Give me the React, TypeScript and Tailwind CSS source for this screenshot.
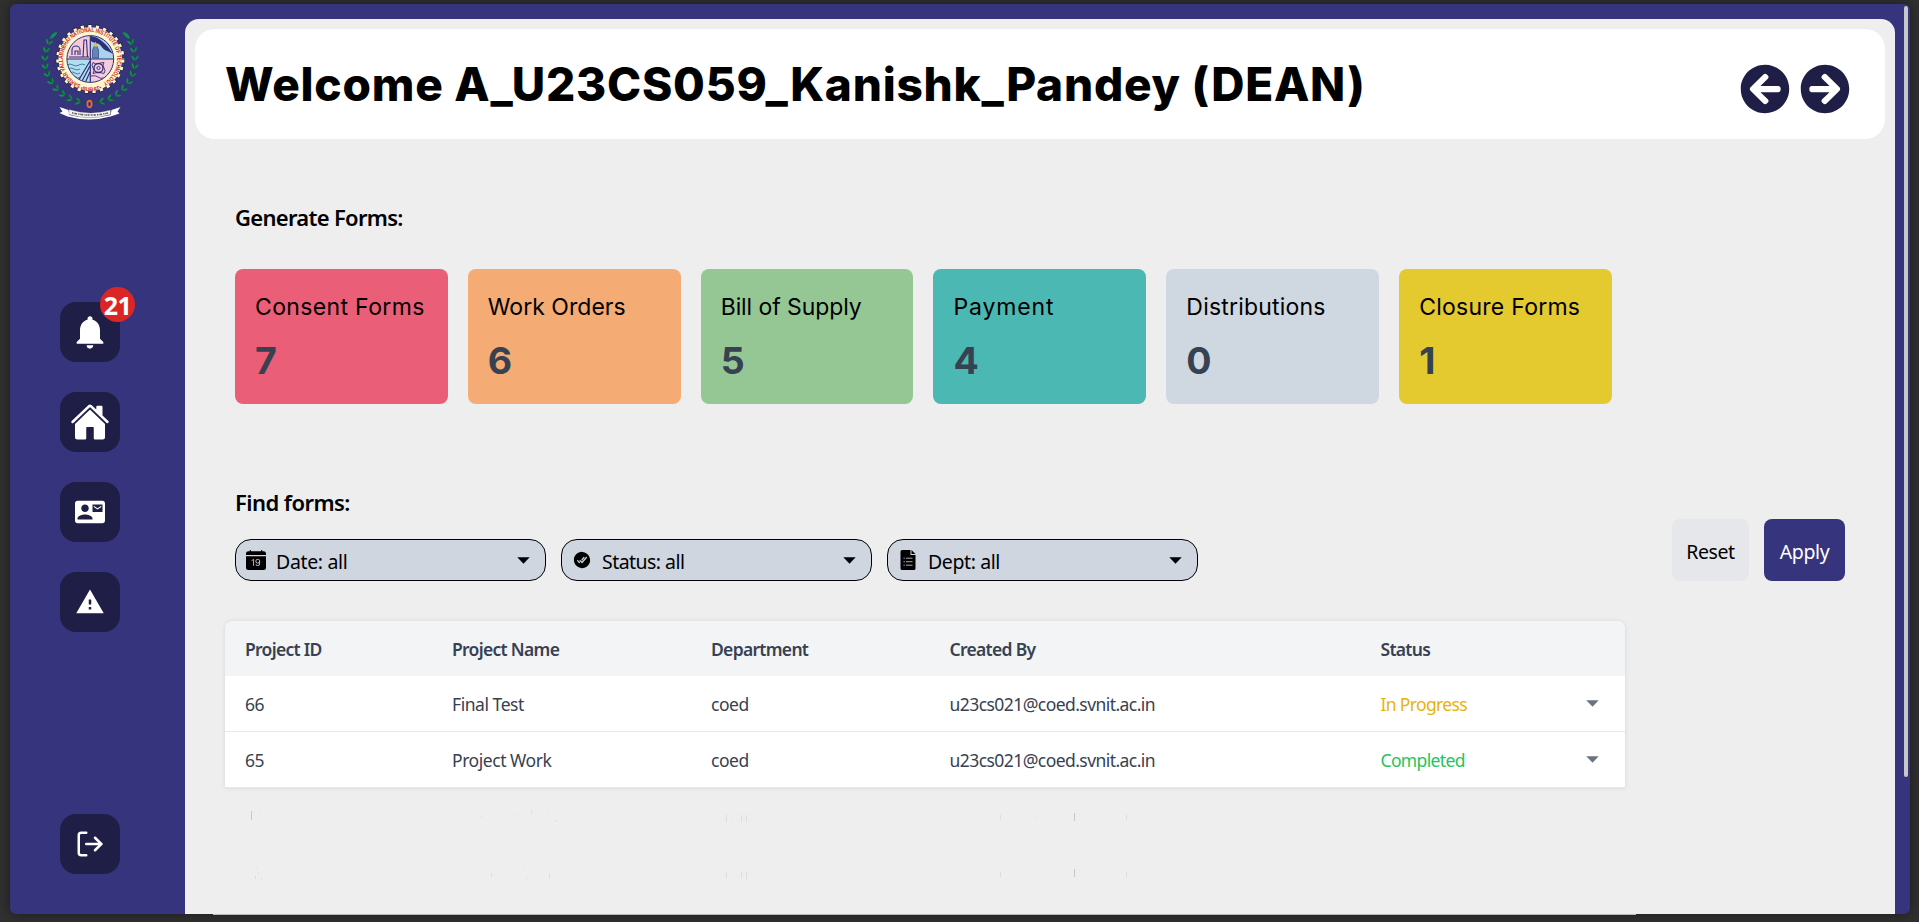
import type { ReactNode } from "react";
import { FaArrowCircleLeft, FaArrowCircleRight } from "react-icons/fa";
import { MdContactMail, MdNotifications, MdWarning } from "react-icons/md";
import { IoCheckmarkDoneCircle, IoHome } from "react-icons/io5";
import { BsCalendarDateFill } from "react-icons/bs";
import { LuLogOut } from "react-icons/lu";

const cards = [
  { label: "Consent Forms", value: 7, color: "bg-[#eb5e78]", track: "tracking-[0.35px]" },
  { label: "Work Orders", value: 6, color: "bg-[#f4ab74]", track: "tracking-[0.03px]" },
  { label: "Bill of Supply", value: 5, color: "bg-[#95c795]", track: "tracking-[-0.08px]" },
  { label: "Payment", value: 4, color: "bg-[#4bb8b4]", track: "tracking-[0.85px]" },
  { label: "Distributions", value: 0, color: "bg-[#cfd7e1]", track: "tracking-[0.2px]" },
  { label: "Closure Forms", value: 1, color: "bg-[#e4c92f]", track: "tracking-[0.25px]" },
];

const rows = [
  { id: "66", name: "Final Test", dept: "coed", by: "u23cs021@coed.svnit.ac.in", status: "In Progress", color: "text-[#eab308]" },
  { id: "65", name: "Project Work", dept: "coed", by: "u23cs021@coed.svnit.ac.in", status: "Completed", color: "text-[#22c55e]" },
];

const columns = "grid grid-cols-[207px_259px_238.5px_431px_1fr] pl-5";

// x, y and height of the faint marks under the table
const specks: [number, number, number][] = [
  [26, 0, 9], [34, 1, 1], [256, 5, 1], [289, 4, 1], [306, 0, 3], [323, 0, 1], [330, 9, 2],
  [501, 4, 7], [506, 7, 1], [516, 4, 7], [521, 4, 7], [775, 4, 5], [811, 6, 1], [849, 2, 8], [901, 4, 5],
  [31, 57, 1], [33, 61, 2], [30, 65, 3], [36, 68, 1], [249, 57, 1], [266, 62, 4], [298, 57, 1],
  [302, 67, 1], [324, 62, 5], [501, 61, 6], [516, 61, 6], [521, 61, 7], [775, 61, 5], [849, 58, 8], [901, 61, 5],
];

function Leaf({ angle, side }: { angle: number; side: number }) {
  const a = (angle * Math.PI) / 180;
  const x = 90 + 45 * Math.cos(a);
  const y = 60 + 43 * Math.sin(a);
  return (
    <g transform={`translate(${x} ${y}) rotate(${angle - 90 * side}) scale(.88)`}>
      <path d="M0 0C1 -2.6 3.4 -4 6 -4 5.6 -1.8 3 0 0 0Z" fill="#0f9347" />
      <path d="M0 0C1 2.6 3.4 4 6 4 5.6 1.8 3 0 0 0Z" fill="#0c8a41" />
    </g>
  );
}

function Emblem() {
  const leftLeaves = [102, 113, 124, 135, 146, 157, 168, 179, 190, 201];
  const rightLeaves = leftLeaves.map((a) => 180 - a);
  return (
    <svg width="102" height="100" viewBox="40 22 102 100">
      <defs>
        <path id="ring" d="M80.6 84.6A27.2 27.2 0 1 1 101.4 83.8" />
        <path id="ringBottom" d="M78 88.6A31.8 31.8 0 0 0 104 88" />
        <clipPath id="disc"><circle cx="90.3" cy="59" r="23.2" /></clipPath>
      </defs>
      <path d="M50 40A45 43 0 0 0 86 103M130 40A45 43 0 0 1 94 103" fill="none" stroke="#14502f" strokeWidth="0.9" />
      {leftLeaves.map((a) => <Leaf key={a} angle={a} side={-1} />)}
      {rightLeaves.map((a) => <Leaf key={a} angle={a} side={1} />)}
      <path d="M50 39C50.5 35 53.500 32 57.500 32 56 36 53 38.500 50 39ZM130 39C129.500 35 126.500 32 122.500 32 124 36 127 38.500 130 39Z" fill="#0f9347" />
      <circle cx="90.3" cy="59" r="32.8" fill="none" stroke="#26223a" strokeWidth="4" strokeDasharray="4.3 3.287" />
      <circle cx="90.3" cy="59" r="32.3" fill="none" stroke="#fdf6cf" strokeWidth="3.600" strokeDasharray="3.2 4.272" strokeDashoffset="-0.5" />
      <circle cx="90.3" cy="59" r="31.8" fill="#fdf6cf" />
      <g clipPath="url(#disc)">
        <path d="M66 35h24v24H66z" fill="#f4cbdc" />
        <path d="M90 35h25v24H90z" fill="#a9d3ec" />
        <path d="M66 59h24v25H66z" fill="#b3dcf0" />
        <path d="M90 59h25v25H90z" fill="#f4cbdc" />
        <path d="M91 36c8 1 16 8 22 18-6-4-9-3-12-8-3-4-6-2-10-5z" fill="#2f2f78" />
        <path d="M92.500 58V50l3-7 3 7v8z" fill="#6387b4" stroke="#2f2f78" strokeWidth="0.600" />
        <path d="M93.500 46.500l2-5 2 5z" fill="#f0c32c" />
        <path d="M83 57l1-17h2.500l1 17M72 55v-5a4 4 0 0 1 8 0v5M75 55v-4h3v4M69 57h20" fill="none" stroke="#2f2f78" strokeWidth="1.1" />
        <path d="M67 65q3-2 6 0t6 0 6 0M68 69q3-2 6 0t6 0M70 73q2.500-2 5 0t5 0M72 77q2-2 4 0t4 0" fill="none" stroke="#2f7d9e" strokeWidth="0.9" />
        <path d="M90 61L77 83M90 66L81 83M90 72l-5 11" fill="none" stroke="#2f2f78" strokeWidth="1.200" />
        <circle cx="98.500" cy="68" r="4.500" fill="none" stroke="#2f2f78" strokeWidth="1.300" />
        <circle cx="98.500" cy="68" r="1.600" fill="none" stroke="#2f2f78" strokeWidth="0.9" />
        <path d="M93 62.500q2 2 5.500 1t5.500-1q-2 3 0 5.500t0 5.500q-3-1-5.500-1t-5.500 1q2-3 0-5.500t0-5.500zM91 76q5-1 7 1t6 1" fill="none" stroke="#2f2f78" strokeWidth="0.900" />
      </g>
      <path d="M67 59h46.600M90.300 35.700v46.600" stroke="#2f2f78" strokeWidth="1.200" />
      <circle cx="90.3" cy="59" r="23.4" fill="none" stroke="#2f2f78" strokeWidth="1" />
      <text fontSize="6.2" fontWeight="700" fill="#c8281c" fontFamily="Liberation Sans, sans-serif">
        <textPath href="#ring" textLength="147" lengthAdjust="spacingAndGlyphs">SARDAR VALLABHBHAI NATIONAL INSTITUTE OF TECHNOLOGY</textPath>
      </text>
      <text fontSize="5.4" fontWeight="700" fill="#c8281c" fontFamily="Liberation Sans, sans-serif">
        <textPath href="#ringBottom" startOffset="50%" textAnchor="middle">•SURAT•</textPath>
      </text>
      <ellipse cx="89.5" cy="104" rx="2.1" ry="3.2" fill="#2f2f78" stroke="#e2683a" strokeWidth="1.900" />
      <path d="M59.500 107l9 3 1 5q20 5 41 0l1-5 9-3-3 4.500 2 2-9 3q-21 6-43 0l-8-3.500 3-1.500z" fill="#fff" />
      <path d="M69 109.500v5q21 6.500 41.500 0v-4.500q-20.500 6-41.500-0.500z" fill="#f4f4f4" stroke="#555" strokeWidth="0.300" />
      <path d="M72 112.800q18 4.500 36 0.200" fill="none" stroke="#555" strokeWidth="1.5" strokeDasharray="1.200 .6 .8 .5 2 1.2" />
    </svg>
  );
}

function Caret({ className }: { className: string }) {
  return (
    <svg width="13" height="7" viewBox="0 0 13 7" className={className}>
      <path d="M0.300 0.300h12.400L6.500 6.700z" fill="currentColor" />
    </svg>
  );
}

function FileIcon() {
  return (
    <svg width="20" height="20" viewBox="0 0 20 20">
      <path d="M4 0h8.500v5h5v13.500a1.500 1.500 0 0 1-1.500 1.500H4a1.500 1.500 0 0 1-1.500-1.500V1.500A1.500 1.500 0 0 1 4 0zM13.500 0l4 4h-4z" fill="#000" />
      <path d="M5.500 8.200h1.300M5.500 11.700h1.300M5.500 15.200h1.300M8 8.200h6.500M8 11.700h6.500M8 15.200h6.500" stroke="#cfd6e0" strokeWidth="0.8" />
    </svg>
  );
}

function SideButton({ children }: { children: ReactNode }) {
  return (
    <button className="relative flex size-[60px] items-center justify-center rounded-2xl bg-[#1e1e46] text-white">
      {children}
    </button>
  );
}

function Filter({ icon, label, track }: { icon: ReactNode; label: string; track: string }) {
  return (
    <button className="flex h-[42px] w-[311px] items-center rounded-2xl border border-black bg-[#cfd6e0] pr-[15px] pl-[10px] text-black">
      {icon}
      <span className={`ml-[10px] pt-[3px] text-[19.5px] leading-7 ${track}`}>{label}</span>
      <Caret className="ml-auto" />
    </button>
  );
}

export default function App() {
  return (
    <div className="h-[922px] w-full overflow-hidden bg-[#303030] pt-1 font-['Noto_Sans',sans-serif]">
      <div className="ml-[10px] flex h-[910px] w-[1900px] rounded-md bg-[#35347c] shadow-[0_0_12px_rgba(0,0,0,0.45)]">
        <aside className="flex h-full w-[175px] shrink-0 flex-col items-start">
          <div className="ml-[30px] h-[298px] pt-[18px]"><Emblem /></div>
          <nav className="ml-[50px] flex flex-col gap-[30px]">
            <SideButton>
              <MdNotifications size={40} />
              <span className="absolute -top-[15px] left-10 flex size-[35px] items-center justify-center rounded-full bg-[#dc2626] pt-0.5 text-[25px] leading-none font-bold tracking-[-0.5px]">21</span>
            </SideButton>
            <SideButton><IoHome size={40} /></SideButton>
            <SideButton><MdContactMail size={30} /></SideButton>
            <SideButton><MdWarning size={30} /></SideButton>
          </nav>
          <div className="mt-auto mb-10 ml-[50px]">
            <SideButton><LuLogOut size={30} /></SideButton>
          </div>
        </aside>

        <main className="mt-[15px] h-[895px] w-[1710px] shrink-0 rounded-t-[14px] bg-[#eeeeee] pt-[10px]">
          <header className="mx-[10px] flex h-[110px] items-center justify-between rounded-[20px] bg-white pr-[35px] pl-[30px]">
            <h1 className="pb-px font-['Inter',sans-serif] text-[46px] leading-[56px] font-extrabold tracking-[0.76px] whitespace-nowrap text-black">
              Welcome A_U23CS059_Kanishk_Pandey (DEAN)
            </h1>
            <div className="flex gap-[10px] pt-[10px] text-[#1e1e46]">
              <FaArrowCircleLeft size={50} />
              <FaArrowCircleRight size={50} />
            </div>
          </header>

          <section className="pt-[62px] pl-[50px]">
            <h2 className="text-[22px] leading-8 font-semibold tracking-[-0.7px]">Generate Forms:</h2>
            <div className="mt-9 grid w-[1377px] grid-cols-6 gap-5">
              {cards.map((c) => (
                <div key={c.label} className={`h-[135px] rounded-lg px-5 pt-[22px] font-['Inter',sans-serif] ${c.color}`}>
                  <p className={`text-[23px] leading-8 whitespace-nowrap text-black ${c.track}`}>{c.label}</p>
                  <p className="mt-[18px] text-[37.5px] leading-10 font-bold text-[#374151]">{c.value}</p>
                </div>
              ))}
            </div>
          </section>

          <section className="mt-[82px] flex items-end justify-between pr-[50px] pl-[50px]">
            <div>
              <h2 className="text-[22px] leading-8 font-semibold tracking-[-0.55px]">Find forms:</h2>
              <div className="mt-[21px] flex gap-[15px]">
                <Filter icon={<BsCalendarDateFill size={20} />} label="Date: all" track="tracking-[-0.35px]" />
                <Filter icon={<IoCheckmarkDoneCircle size={20} />} label="Status: all" track="tracking-[-0.55px]" />
                <Filter icon={<FileIcon />} label="Dept: all" track="tracking-[-0.4px]" />
              </div>
            </div>
            <div className="flex gap-[15px] text-[19.5px] tracking-[-0.4px]">
              <button className="h-[62px] w-[77px] rounded-lg bg-[#e5e7eb] pt-1 text-black">Reset</button>
              <button className="h-[62px] w-[81px] rounded-lg bg-[#35347c] pt-1 text-white">Apply</button>
            </div>
          </section>

          <section className="mt-10 ml-10 w-[1400px] rounded-t-lg bg-white text-[17.5px] text-[#374151] shadow-[0_0_4px_rgba(0,0,0,0.1)]">
            <div className={`${columns} h-[55px] items-center rounded-t-lg bg-[#f3f4f6] pt-0.5 font-semibold tracking-[-0.7px]`}>
              <span>Project ID</span>
              <span>Project Name</span>
              <span>Department</span>
              <span>Created By</span>
              <span>Status</span>
            </div>
            {rows.map((r) => (
              <div key={r.id} className={`${columns} h-14 items-center border-b border-[#e5e7eb] pt-0.5 tracking-[-0.45px]`}>
                <span>{r.id}</span>
                <span>{r.name}</span>
                <span>{r.dept}</span>
                <span className="tracking-[-0.56px]">{r.by}</span>
                <span className="flex items-center justify-between pr-[26px] tracking-[-0.65px]">
                  <span className={r.color}>{r.status}</span>
                  <Caret className="mb-[3px] text-[#6b7280]" />
                </span>
              </div>
            ))}
          </section>

          <svg width="1400" height="72" viewBox="0 0 1400 72" className="mt-[23px] ml-10">
            {specks.map(([x, y, h]) => (
              <rect key={`${x}-${y}`} x={x} y={y} width="1" height={h} fill="#000" opacity={h > 7 ? 0.16 : 0.07} />
            ))}
          </svg>
        </main>
        <div className="mt-0.5 ml-[9px] h-[771px] w-1 rounded-sm bg-[#c8c8cb]" />
      </div>
      <div className="relative ml-[213px] h-px w-[1423px] bg-[#b5b9b8]" />
    </div>
  );
}
